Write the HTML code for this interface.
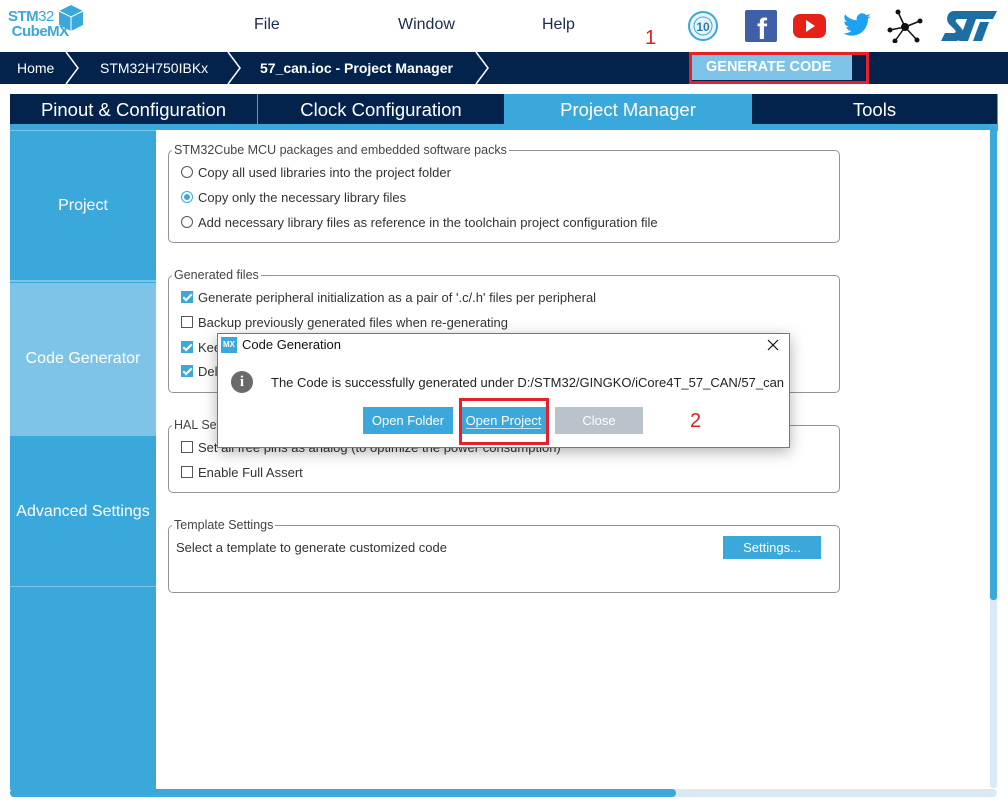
<!DOCTYPE html>
<html><head><meta charset="utf-8"><style>
*{margin:0;padding:0;box-sizing:border-box}
body{width:1008px;height:807px;background:#fff;font-family:"Liberation Sans",Arial,sans-serif;position:relative;overflow:hidden;color:#333}
.a{position:absolute}
.menu{font-size:16px;color:#1c2a4a;top:16px}
.bc{background:#03234c;top:52px;left:0;width:1008px;height:32px}
.bct{color:#fff;font-size:14px;top:60px}
.tab{top:94px;height:30px;color:#fff;font-size:18.5px;text-align:center;line-height:31px;background:#03234c}
.side{left:10px;width:146px;color:#fff;font-size:16px;text-align:center}
.fs{border:1px solid #8f959b;border-radius:5px;left:168px;width:672px}
.lg{font-size:12.5px;color:#444;background:#fff;padding:0 2px;left:172px}
.t{font-size:13px;color:#333;left:198px}
.rb{left:181px;width:12px;height:12px;border:1px solid #555;border-radius:50%}
.cb{left:181px;width:12px;height:12px;border:1px solid #555;background:#fff}
.cbk{left:181px;width:12px;height:12px;background:#3ba8db}
.cbk:after{content:"";position:absolute;left:4px;top:1px;width:3px;height:7px;border:solid #fff;border-width:0 2px 2px 0;transform:rotate(45deg)}
.btn{color:#fff;font-size:13px;text-align:center;line-height:27px;height:27px;top:407px}
</style></head><body>
<!-- logo -->
<div class="a" style="left:8px;top:9px;font-size:15px;font-weight:bold;color:#3ba8db;letter-spacing:-0.5px;line-height:15px">STM<span style="font-weight:normal">32</span><br>&nbsp;CubeMX</div>
<svg class="a" style="left:58px;top:4px" width="26" height="28" viewBox="0 0 26 28"><path d="M13 1L25 7V21L13 27L1 21V7Z" fill="#3ba8db"/><path d="M1 7L13 13L25 7M13 13V27" stroke="#fff" stroke-width="1" fill="none"/></svg>
<div class="a menu" style="left:254px">File</div>
<div class="a menu" style="left:398px">Window</div>
<div class="a menu" style="left:542px">Help</div>
<div class="a" style="left:645px;top:27px;color:#e02020;font-size:20px">1</div>
<!-- icons -->
<svg class="a" style="left:687px;top:10px" width="32" height="32"><circle cx="16" cy="16" r="14" fill="#eaf5fb" stroke="#3ba8db" stroke-width="2"/><circle cx="16" cy="16" r="9" fill="none" stroke="#3ba8db"/><text x="16" y="21" font-size="12" font-weight="bold" text-anchor="middle" fill="#2a7ab0" font-family="Liberation Sans">10</text></svg>
<div class="a" style="left:745px;top:10px;width:32px;height:32px;background:#3f5fa8;border-radius:2px"><div class="a" style="left:12px;top:5px;color:#fff;font-weight:bold;font-size:30px;line-height:30px">f</div></div>
<svg class="a" style="left:793px;top:12px" width="33" height="28"><rect x="0" y="2" width="33" height="24" rx="7" fill="#e62117"/><path d="M13 8L22 14L13 20Z" fill="#fff"/></svg>
<svg class="a" style="left:841px;top:10px" width="32" height="30" viewBox="0 0 24 24"><path d="M23 5a9 9 0 0 1-2.6.7A4.5 4.5 0 0 0 22.4 3a9 9 0 0 1-2.9 1.1A4.5 4.5 0 0 0 11.8 8.2 12.8 12.8 0 0 1 2.5 3.5a4.5 4.5 0 0 0 1.4 6A4.5 4.5 0 0 1 1.8 9v.1a4.5 4.5 0 0 0 3.6 4.4 4.5 4.5 0 0 1-2 .1 4.5 4.5 0 0 0 4.2 3.100A9 9 0 0 1 1 18.5 12.7 12.7 0 0 0 7.9 20.5c8.3 0 12.8-6.9 12.8-12.8v-.6A9 9 0 0 0 23 5z" fill="#1da1f2"/></svg>
<svg class="a" style="left:887px;top:9px" width="36" height="34"><g stroke="#111" stroke-width="1.5"><line x1="18" y1="18" x2="11" y2="3"/><line x1="18" y1="18" x2="33" y2="12"/><line x1="18" y1="18" x2="3" y2="21"/><line x1="18" y1="18" x2="30" y2="31"/><line x1="18" y1="18" x2="8" y2="32"/></g><circle cx="18" cy="18" r="4" fill="#111"/><circle cx="11" cy="3" r="2.5" fill="#111"/><circle cx="33" cy="12" r="2.5" fill="#111"/><circle cx="3" cy="21" r="2.5" fill="#111"/><circle cx="30" cy="31" r="2.5" fill="#111"/><circle cx="8" cy="32" r="2.5" fill="#111"/></svg>
<svg class="a" style="left:940px;top:10px" width="58" height="32" viewBox="0 0 58 32"><path d="M14 1H57L53 9H36L28 31H19L27 9H18C16 9 15 11 16 12L22 19C25 23 22 31 16 31H1L5 23H14C16 23 16 21 15 20L9 14C5 9 8 1 14 1Z" fill="#1d6fa3"/><path d="M40 12H49L42 31H33Z" fill="#1d6fa3"/></svg>
<!-- breadcrumb -->
<div class="a bc"></div>
<div class="a bct" style="left:17px">Home</div>
<svg class="a" style="left:60px;top:52px" width="20" height="32"><path d="M6 0L18 16L6 32" stroke="#fff" stroke-width="1.5" fill="none"/></svg>
<div class="a bct" style="left:100px">STM32H750IBKx</div>
<svg class="a" style="left:222px;top:52px" width="20" height="32"><path d="M6 0L18 16L6 32" stroke="#fff" stroke-width="1.5" fill="none"/></svg>
<div class="a bct" style="left:260px;font-weight:bold">57_can.ioc - Project Manager</div>
<svg class="a" style="left:470px;top:52px" width="20" height="32"><path d="M6 0L18 16L6 32" stroke="#fff" stroke-width="1.5" fill="none"/></svg>
<div class="a" style="left:692px;top:55px;width:160px;height:25px;background:#7dc4e8;color:#fff;font-weight:bold;font-size:14.5px;line-height:25px;padding-left:14px">GENERATE CODE</div>
<div class="a" style="left:689px;top:52px;width:180px;height:32px;border:3px solid #e8202a"></div>
<!-- tabs -->
<div class="a" style="left:10px;top:94px;width:988px;height:37px;background:#3ba8db"></div>
<div class="a tab" style="left:10px;width:247px">Pinout &amp; Configuration</div>
<div class="a tab" style="left:258px;width:246px">Clock Configuration</div>
<div class="a tab" style="left:505px;width:246px;background:#3ba8db">Project Manager</div>
<div class="a tab" style="left:752px;width:245px">Tools</div>
<!-- sidebar -->
<div class="a" style="left:10px;top:130px;width:146px;height:660px;background:#3ba8db"></div>
<div class="a" style="left:10px;top:130px;width:146px;height:1px;background:#7dc4e8"></div>
<div class="a side" style="top:197px">Project</div>
<div class="a" style="left:10px;top:280px;width:146px;height:2px;background:#7dc4e8"></div>
<div class="a" style="left:10px;top:283px;width:146px;height:153px;background:#7dc4e8"></div>
<div class="a side" style="top:350px">Code Generator</div>
<div class="a side" style="top:503px">Advanced Settings</div>
<div class="a" style="left:10px;top:586px;width:146px;height:1px;background:#7dc4e8"></div>
<!-- content -->
<div class="a" style="left:156px;top:130px;width:834px;height:659px;background:#fff"></div>
<div class="a" style="left:990px;top:125px;width:7px;height:663px;background:#d9e9f6;border-radius:3px"></div>
<div class="a" style="left:990px;top:125px;width:7px;height:475px;background:#3ba8db;border-radius:3px"></div>
<div class="a" style="left:10px;top:789px;width:987px;height:8px;background:#d9e9f6;border-radius:4px"></div>
<div class="a" style="left:10px;top:789px;width:666px;height:8px;background:#3ba8db;border-radius:4px"></div>

<div class="a fs" style="top:150px;height:93px"></div>
<div class="a lg" style="top:143px">STM32Cube MCU packages and embedded software packs</div>
<div class="a rb" style="top:166px"></div><div class="a t" style="top:165px">Copy all used libraries into the project folder</div>
<div class="a rb" style="top:191px;border-color:#3ba8db"><div class="a" style="left:2px;top:2px;width:6px;height:6px;border-radius:50%;background:#3ba8db"></div></div><div class="a t" style="top:190px">Copy only the necessary library files</div>
<div class="a rb" style="top:216px"></div><div class="a t" style="top:215px">Add necessary library files as reference in the toolchain project configuration file</div>

<div class="a fs" style="top:275px;height:118px"></div>
<div class="a lg" style="top:268px">Generated files</div>
<div class="a cbk" style="top:291px"></div><div class="a t" style="top:290px">Generate peripheral initialization as a pair of '.c/.h' files per peripheral</div>
<div class="a cb" style="top:316px"></div><div class="a t" style="top:315px">Backup previously generated files when re-generating</div>
<div class="a cbk" style="top:341px"></div><div class="a t" style="top:340px">Keep</div>
<div class="a cbk" style="top:365px"></div><div class="a t" style="top:364px">Delete</div>

<div class="a fs" style="top:425px;height:68px"></div>
<div class="a lg" style="top:418px">HAL Settings</div>
<div class="a cb" style="top:441px"></div><div class="a t" style="top:440px">Set all free pins as analog (to optimize the power consumption)</div>
<div class="a cb" style="top:466px"></div><div class="a t" style="top:465px">Enable Full Assert</div>

<div class="a fs" style="top:525px;height:68px"></div>
<div class="a lg" style="top:518px">Template Settings</div>
<div class="a t" style="left:176px;top:540px">Select a template to generate customized code</div>
<div class="a" style="left:723px;top:536px;width:98px;height:23px;background:#3ba8db;color:#fff;font-size:13px;text-align:center;line-height:23px">Settings...</div>

<!-- dialog -->
<div class="a" style="left:217px;top:333px;width:573px;height:115px;background:#fff;border:1px solid #777;box-shadow:0 4px 14px rgba(0,0,0,.3)"></div>
<div class="a" style="left:221px;top:337px;width:16px;height:16px;background:#3ba8db;color:#fff;font-size:8px;font-weight:bold;text-align:center;line-height:16px">MX</div>
<div class="a" style="left:242px;top:337px;font-size:13px;color:#111">Code Generation</div>
<svg class="a" style="left:767px;top:339px" width="12" height="12"><path d="M1 1L11 11M11 1L1 11" stroke="#111" stroke-width="1.2"/></svg>
<div class="a" style="left:231px;top:371px;width:22px;height:22px;border-radius:50%;background:#6a6a6a;color:#fff;font-weight:bold;font-size:15px;text-align:center;line-height:22px;font-family:'Liberation Serif',serif">i</div>
<div class="a" style="left:271px;top:375px;font-size:13px;color:#222">The Code is successfully generated under D:/STM32/GINGKO/iCore4T_57_CAN/57_can</div>
<div class="a btn" style="left:363px;width:90px;background:#3ba8db">Open Folder</div>
<div class="a btn" style="left:461px;width:85px;background:#3ba8db"><span style="border-bottom:1px solid #cde">Open Project</span></div>
<div class="a btn" style="left:555px;width:88px;background:#b8c3ca">Close</div>
<div class="a" style="left:459px;top:398px;width:90px;height:47px;border:3px solid #e8202a"></div>
<div class="a" style="left:690px;top:410px;color:#e02020;font-size:20px">2</div>
</body></html>
